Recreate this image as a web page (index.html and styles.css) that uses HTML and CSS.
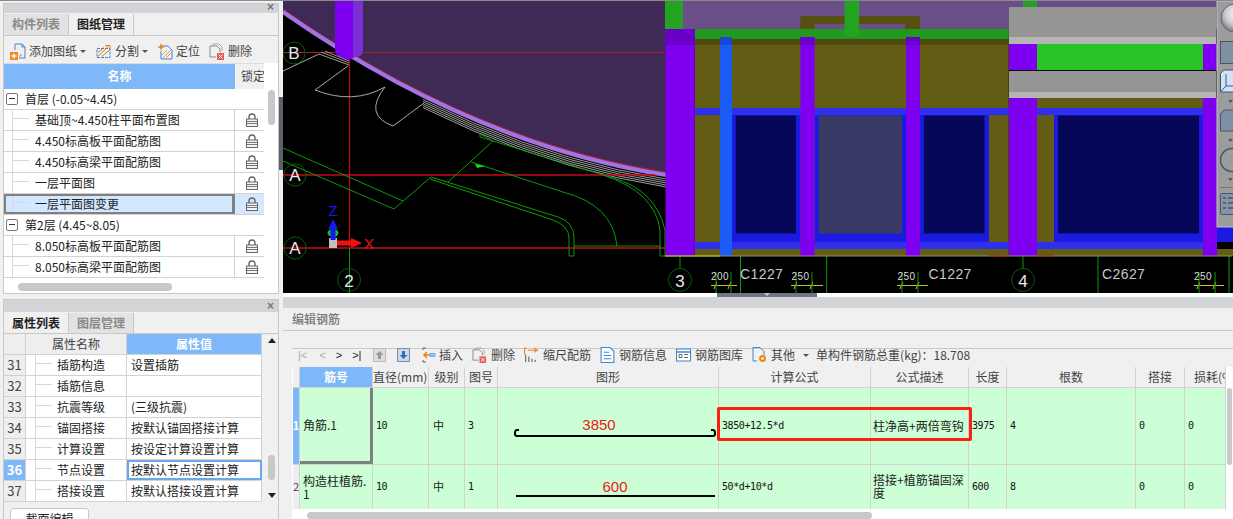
FILE: index.html
```html
<!DOCTYPE html>
<html lang="zh">
<head>
<meta charset="utf-8">
<title>编辑钢筋</title>
<link rel="stylesheet" href="styles.css">
</head>
<body>
<svg class="defs" width="0" height="0">
  <defs>
    <radialGradient id="ball" cx=".55" cy=".35" r=".7"><stop offset="0" stop-color="#fdfdfd"/><stop offset=".6" stop-color="#c4c6ca"/><stop offset="1" stop-color="#6a7078"/></radialGradient>
  </defs>
  <symbol id="i-lock" viewBox="0 0 12 14"><path d="M3 6V4a3 3 0 0 1 6 0v2" fill="none" stroke="#666" stroke-width="1.4"/><rect x=".5" y="6" width="11" height="7.500" fill="#f4f4f4" stroke="#666"/><path d="M1 8.500h10M1 10.500h10" stroke="#777"/></symbol>
  <symbol id="i-add" viewBox="0 0 16 17"><path d="M5 1h7l3 3v11H9M5 1v6" fill="none" stroke="#3f86d0"/><path d="M12 1v3h3" fill="none" stroke="#3f86d0"/><path d="M11 11v2h-2" fill="none" stroke="#999"/><rect x="0" y="9" width="8" height="8" fill="#f08a1c"/><path d="M4 10.500v5M1.500 13h5" stroke="#fff" stroke-width="1.4"/></symbol>
  <symbol id="i-split" viewBox="0 0 17 16"><path d="M2 5h13v9H2z" fill="none" stroke="#3f86d0" stroke-dasharray="3 1"/><path d="M3 13 13 3M7 13l8-7M3 9l6-5" stroke="#d9781c" fill="none"/><path d="M10 2h5v4" fill="none" stroke="#d9781c"/></symbol>
  <symbol id="i-locate" viewBox="0 0 16 17"><path d="M5 3h6l4 4v9H4V8" fill="none" stroke="#3f86d0"/><path d="M6 15l8-8M9 15l5-5M5 12l5-5" stroke="#e8a060"/><path d="M4 0l1 3 3 1-3 1-1 3-1-3-3-1 3-1z" fill="#f0801c"/></symbol>
  <symbol id="i-del" viewBox="0 0 16 17"><path d="M4 3V1h6l3 3v4" fill="none" stroke="#aaa"/><path d="M1 3h7l3 3v3M1 3v11h6" fill="none" stroke="#888"/><rect x="8" y="10" width="7" height="7" fill="#e05a5a"/><path d="M9.500 11.500l4 4M13.500 11.500l-4 4" stroke="#fff"/></symbol>
  <symbol id="i-up" viewBox="0 0 13 14"><rect x=".5" y=".5" width="12" height="13" fill="#ddd" stroke="#bbb"/><path d="M6.500 3 2.500 7H5v4h3V7h2.500z" fill="#999"/></symbol>
  <symbol id="i-down" viewBox="0 0 13 14"><rect x=".5" y=".5" width="12" height="13" fill="#cfd8e4" stroke="#7d8fa6"/><path d="M6.500 11l4-4H8V3H5v4H2.500z" fill="#2a6fc9"/></symbol>
  <symbol id="i-insert" viewBox="0 0 15 16"><path d="M2 1h3M2 1v2M2 13v2h3" stroke="#666" fill="none"/><path d="M9 8H4M6 5 3 8l3 3" stroke="#e8801c" stroke-width="1.500" fill="none"/><rect x="9" y="6.500" width="5" height="3" fill="#9cc4ec" stroke="#4a8ad0" stroke-width=".6"/></symbol>
  <symbol id="i-scale" viewBox="0 0 13 15"><path d="M0 1v6M0 1h2" stroke="#e8801c" fill="none"/><path d="M3 3h8M9 1l3 2-3 2" stroke="#e8801c" fill="none"/><path d="M1 14V7M4 14V9M7 14v-3M10 14v-2" stroke="#777" stroke-width="1.200"/></symbol>
  <symbol id="i-info" viewBox="0 0 13 15"><path d="M.5.500H9L12.500 4v10.500H.5z" fill="#fff" stroke="#3f86d0"/><path d="M3 5h5M3 8h7M3 11h7" stroke="#3f86d0"/></symbol>
  <symbol id="i-lib" viewBox="0 0 15 13"><rect x=".5" y=".5" width="14" height="12" fill="#fff" stroke="#3f86d0"/><path d="M1 3.500h13" stroke="#3f86d0" stroke-width="1.500"/><path d="M3 6h3v3H3zM8 6h4M8 9h4" stroke="#666" fill="none"/></symbol>
  <symbol id="i-other" viewBox="0 0 15 16"><path d="M1 .500h7l4 4v4M1 .500V14h4" fill="none" stroke="#3f86d0"/><circle cx="10.500" cy="11.500" r="3.500" fill="#f08a1c"/><circle cx="10.500" cy="11.500" r="1.200" fill="#fff"/></symbol>
</svg>

<div class="app">
  <aside class="side">
    <section class="panel drawings">
      <div class="panel-title"><span class="close">×</span></div>
      <div class="tabs">
        <span class="tab">构件列表</span>
        <span class="tab on">图纸管理</span>
      </div>
      <div class="toolbar">
        <span class="tool"><svg class="ico"><use href="#i-add"/></svg>添加图纸<i class="caret"></i></span>
        <span class="tool"><svg class="ico wide"><use href="#i-split"/></svg>分割<i class="caret"></i></span>
        <span class="tool"><svg class="ico"><use href="#i-locate"/></svg>定位</span>
        <span class="tool"><svg class="ico"><use href="#i-del"/></svg>删除</span>
      </div>
      <div class="dwg-head">
        <span class="head-blue">名称</span>
        <span class="head-plain">锁定</span>
      </div>
      <div class="dwg-body">
        <div class="dwg-row group"><span class="toggle"></span><span>首层 (-0.05~4.45)</span></div>
        <div class="dwg-row"><span class="dwg-name"><i class="branch"></i>基础顶~4.450柱平面布置图</span><span class="lockcell"><svg class="lock"><use href="#i-lock"/></svg></span></div>
        <div class="dwg-row"><span class="dwg-name"><i class="branch"></i>4.450标高板平面配筋图</span><span class="lockcell"><svg class="lock"><use href="#i-lock"/></svg></span></div>
        <div class="dwg-row"><span class="dwg-name"><i class="branch"></i>4.450标高梁平面配筋图</span><span class="lockcell"><svg class="lock"><use href="#i-lock"/></svg></span></div>
        <div class="dwg-row"><span class="dwg-name"><i class="branch"></i>一层平面图</span><span class="lockcell"><svg class="lock"><use href="#i-lock"/></svg></span></div>
        <div class="dwg-row picked"><span class="dwg-name"><i class="branch"></i>一层平面图变更</span><span class="lockcell"><svg class="lock"><use href="#i-lock"/></svg></span></div>
        <div class="dwg-row group"><span class="toggle"></span><span>第2层 (4.45~8.05)</span></div>
        <div class="dwg-row"><span class="dwg-name"><i class="branch"></i>8.050标高板平面配筋图</span><span class="lockcell"><svg class="lock"><use href="#i-lock"/></svg></span></div>
        <div class="dwg-row"><span class="dwg-name"><i class="branch"></i>8.050标高梁平面配筋图</span><span class="lockcell"><svg class="lock"><use href="#i-lock"/></svg></span></div>
      </div>
      <i class="thumb dwg-v"></i>
      <i class="thumb dwg-h"></i>
    </section>

    <section class="panel props">
      <div class="panel-title"><span class="close">×</span></div>
      <div class="tabs">
        <span class="tab on">属性列表</span>
        <span class="tab">图层管理</span>
      </div>
      <div class="prop-table">
        <div class="prop-row head"><span class="num"></span><span class="pname">属性名称</span><span class="pval">属性值</span></div>
        <div class="prop-row"><span class="num">31</span><span class="pname"><i class="branch"></i>插筋构造</span><span class="pval">设置插筋</span></div>
        <div class="prop-row"><span class="num">32</span><span class="pname"><i class="branch"></i>插筋信息</span><span class="pval"></span></div>
        <div class="prop-row"><span class="num">33</span><span class="pname"><i class="branch"></i>抗震等级</span><span class="pval">(三级抗震)</span></div>
        <div class="prop-row"><span class="num">34</span><span class="pname"><i class="branch"></i>锚固搭接</span><span class="pval">按默认锚固搭接计算</span></div>
        <div class="prop-row"><span class="num">35</span><span class="pname"><i class="branch"></i>计算设置</span><span class="pval">按设定计算设置计算</span></div>
        <div class="prop-row active"><span class="num">36</span><span class="pname"><i class="branch"></i>节点设置</span><span class="pval">按默认节点设置计算</span></div>
        <div class="prop-row"><span class="num">37</span><span class="pname"><i class="branch"></i>搭接设置</span><span class="pval">按默认搭接设置计算</span></div>
      </div>
      <i class="arrow-up"></i>
      <i class="arrow-down"></i>
      <i class="thumb prop-v"></i>
      <div class="prop-foot"><span class="foot-btn">截面编辑</span></div>
    </section>
    <i class="side-grip"></i>
  </aside>

  <main class="work">
    <svg class="cad" viewBox="0 1 950 292" width="950" height="292">
      <rect y="1" width="950" height="292" fill="#000"/>
      <path d="M0 0H383V175Q190 144.500 0 12Z" fill="#3f2a55"/>
      <path d="M0 9.500Q190 142 383 172.500" fill="none" stroke="#a8283c" stroke-width="1.500"/>
      <path d="M0 12Q190 144.500 383 175" fill="none" stroke="#a273e4" stroke-width="4"/>
      <clipPath id="stripes"><rect x="140" y="90" width="243" height="110"/></clipPath>
      <g fill="none" stroke="#c4c4c4" stroke-width=".8" clip-path="url(#stripes)">
        <path d="M0 16Q190 148.500 383 179"/><path d="M0 18Q190 150.500 383 181"/><path d="M0 20Q190 152.500 383 183"/><path d="M0 22Q190 154.500 383 185"/><path d="M0 24Q190 156.500 383 187"/>
      </g>
      <g fill="none">
        <path d="M0 52.500H382" stroke="#b0182c" stroke-width="1.200"/>
        <path d="M0 175H372" stroke="#c00c18" stroke-width="1.500"/>
        <path d="M0 248H382" stroke="#c00c18" stroke-width="1.500"/>
        <path d="M66.500 60V248" stroke="#c00c18" stroke-width="1.200"/>
      </g>
      <path d="M52 1H80V50Q80 57 72 57L66 60 60 58Q52 56 52 50Z" fill="#7f00ee"/>
      <path d="M70 1H80V50Q80 57 72 57H70Z" fill="#7a30d4"/>
      <g fill="none" stroke="#aaa" stroke-width="1">
        <path d="M0 71 36 54M65 66 32 90"/>
        <path d="M32 90Q70 105 102 87"/>
        <path d="M102 87Q80 115 110 126L141 103"/>
      </g>
      <g fill="none" stroke="#c4c4c4" stroke-width=".8">
        <path d="M36 54 66 65M38 52 66 63M42 51 66 61"/>
      </g>
      <g fill="none" stroke="#0a9a0a" stroke-width="1">
        <path d="M0 148 120 201M0 161 111 209 148 177 275 217Q291 222 291 238V256H286V238Q286 226 270 220L147 179"/>
        <path d="M165 182 210 141 197 134V137L330 178Q373 190 382 230M188 162 280 192Q330 205 334 246M291 246H378M382 230V256H377V230Q372 192 320 175"/>
        <path d="M66.500 248V293"/>
        <path d="M457.500 256V293M543.700 256V293M815 256V293M946 256V293"/>
        <path d="M397 256V269M740 256V269"/>
      </g>
      <path d="M192 164l10 2-8 2z" fill="#18e018"/>
      <g fill="none" stroke="#0a5a0a">
        <circle cx="11" cy="53" r="11"/><circle cx="12" cy="175" r="11"/><circle cx="12" cy="248" r="11"/><circle cx="66" cy="280" r="11.500"/><circle cx="397" cy="280" r="11.500"/><circle cx="740" cy="280" r="11.500"/>
      </g>
      <g class="cad-mark">
        <text x="11" y="59">B</text><text x="12" y="181">A</text><text x="12" y="254">A</text><text x="66" y="287">2</text><text x="397" y="287">3</text><text x="740" y="287">4</text>
      </g>
      <text class="cad-z" x="50" y="216">Z</text>
      <rect x="46" y="238" width="8" height="10" fill="#c0c0c0"/>
      <path d="M48.500 240V229H45L50 219 55 229H52V240Z" fill="#1818f0"/>
      <ellipse cx="50" cy="233" rx="5.500" ry="4" fill="#10c020"/>
      <rect x="47.500" y="224" width="5" height="16" fill="#1818f0"/>
      <path d="M54 240.500H68V238L79 243 68 248V245.500H54Z" fill="#f01010"/>
      <text class="cad-x" x="81" y="249">X</text>

      <!-- building elevation -->
      <rect x="382" y="1" width="568" height="28" fill="#6b4d88"/>
      <rect x="382" y="1" width="18" height="28" fill="#22a322"/>
      <path d="M517.400 16H637V29H622V24H531.600V29H517.400Z" fill="#564f10"/>
      <rect x="411.700" y="29" width="314" height="227" fill="#635c14"/>
      <rect x="411.700" y="29" width="314" height="10" fill="#1f9a1f"/>
      <rect x="411.700" y="39" width="314" height="6" fill="#514a10"/>
      <rect x="561.600" y="1" width="14.600" height="36" fill="#22a322"/>
      <rect x="754" y="98" width="166" height="158" fill="#635c14"/>
      <rect x="411.700" y="108" width="508" height="7" fill="#2f2ff0"/>
      <rect x="411.700" y="242" width="522" height="7" fill="#2f2ff0"/>
      <g fill="#1a1ae0">
        <rect x="449" y="115" width="68.400" height="127"/><rect x="531.600" y="115" width="91.400" height="127"/><rect x="636.900" y="115" width="69.100" height="127"/><rect x="771" y="115" width="149" height="127"/>
      </g>
      <g fill="#07075a">
        <rect x="452.700" y="115.500" width="60.300" height="118"/><rect x="640.900" y="115.500" width="60.700" height="118"/><rect x="775" y="115.500" width="141" height="118"/>
      </g>
      <rect x="535.600" y="115.500" width="83.400" height="118" fill="#3a3a66"/>
      <rect x="382.500" y="29" width="29.200" height="227" fill="#7f00f0"/>
      <rect x="382.500" y="29" width="29.200" height="16" fill="#6a00c8"/>
      <rect x="437" y="37" width="12" height="219" fill="#1a5cf5"/>
      <rect x="437" y="37" width="12" height="8" fill="#1a48d0"/>
      <rect x="517.400" y="37" width="14.200" height="219" fill="#7f00f0"/>
      <rect x="623" y="37" width="13.900" height="219" fill="#7f00f0"/>
      <rect x="517.400" y="37" width="14.200" height="8" fill="#6a00c8"/>
      <rect x="623" y="37" width="13.900" height="8" fill="#6a00c8"/>
      <rect x="726" y="98" width="28" height="158" fill="#7f00f0"/>
      <rect x="919.800" y="98" width="14.200" height="158" fill="#7f00f0"/>
      <rect x="934" y="115" width="16" height="127" fill="#1a1ae0"/>
      <rect x="934" y="249" width="16" height="7" fill="#635c14"/>
      <rect x="740" y="1" width="14" height="6" fill="#22a322"/>
      <rect x="726" y="7" width="207" height="30" fill="#959595"/>
      <rect x="726" y="37" width="207" height="7" fill="#b5b5b5"/>
      <rect x="726" y="44" width="28" height="26" fill="#7f00f0"/>
      <rect x="754" y="44" width="166" height="26" fill="#28c428"/>
      <rect x="920" y="44" width="14" height="26" fill="#7f00f0"/>
      <rect x="726" y="71" width="207" height="21" fill="#959595"/>
      <rect x="726" y="92" width="207" height="6" fill="#b5b5b5"/>
      <path d="M382 256H949" stroke="#8f8f6a"/>
      <path d="M382 256H437" stroke="#c8c020"/>
      <path d="M706 256H724M754 256H771" stroke="#c01010"/>

      <!-- dimension marks -->
      <g stroke="#c8c020" fill="none">
        <path d="M428 285.500H454M508 285.500H540M614 285.500H645M911 285.500H941"/>
        <path d="M434 282l-3 7M448 282l-3 7M514 282l-3 7M530 282l-3 7M620 282l-3 7M636 282l-3 7M917 282l-3 7M933 282l-3 7"/>
      </g>
      <g stroke="#0a9a0a"><path d="M433 272V293M448 272V293M513 272V293M529 272V293M619 272V293M635 272V293M916 272V293M932 272V293"/></g>
      <g class="cad-dim"><text x="428" y="280">200</text><text x="508.500" y="280">250</text><text x="614.500" y="280">250</text><text x="911" y="280">250</text></g>
      <g class="cad-label"><text x="457" y="279">C1227</text><text x="645.500" y="279">C1227</text><text x="819" y="279">C2627</text></g>

      <!-- floating view toolbar -->
      <rect x="934" y="1" width="17" height="226" fill="#9c9c9c" stroke="#c4c4c4"/>
      <circle cx="952" cy="18" r="14" fill="url(#ball)" stroke="#5a6470"/>
      <rect x="937.500" y="41.500" width="20" height="22" fill="#8090a4" stroke="#4a5664"/>
      <path d="M941 70H960V92H937.500V73.500Z" fill="#cfe2fb" stroke="#4a5664"/>
      <path d="M937.500 92 943 86V74M943 86H960" fill="none" stroke="#4a5664"/>
      <path d="M941 110H960V131H937.500V114Z" fill="#8090a4" stroke="#4a5664"/>
      <path d="M945 100h5l-2.500 3zM945 139h5l-2.500 3zM945 178h5l-2.500 3z" fill="#555"/>
      <circle cx="949" cy="160" r="11.500" fill="none" stroke="#4a5664" stroke-width="1.500"/>
      <path d="M937 187.500H950" stroke="#777"/>
      <rect x="937.500" y="193.500" width="20" height="21" rx="1" fill="#8494a6" stroke="#4a5664"/>
      <path d="M940 198h3M945 198h5M940 203h3M945 203h5M940 208h3M945 208h5" stroke="#333"/>
    </svg>

    <div class="sash"><span class="sash-grip"></span></div>

    <section class="editor">
      <div class="panel-title wide-title"></div>
      <div class="editor-title">编辑钢筋</div>
      <div class="editor-space"></div>
      <div class="rebar-box">
        <div class="rebar-tools">
          <span class="pager"><b class="dim first">|&lt;</b><b class="dim">&lt;</b><b>&gt;</b><b>&gt;|</b></span>
          <svg class="ico13"><use href="#i-up"/></svg>
          <svg class="ico13 nudge"><use href="#i-down"/></svg>
          <span class="tool tight nudge"><svg class="ico"><use href="#i-insert"/></svg>插入</span>
          <span class="tool"><svg class="ico"><use href="#i-del"/></svg>删除</span>
          <span class="tool"><svg class="ico"><use href="#i-scale"/></svg>缩尺配筋</span>
          <span class="tool"><svg class="ico"><use href="#i-info"/></svg>钢筋信息</span>
          <span class="tool"><svg class="ico"><use href="#i-lib"/></svg>钢筋图库</span>
          <span class="tool"><svg class="ico"><use href="#i-other"/></svg>其他<i class="caret"></i></span>
          <span class="total">单构件钢筋总重(kg)：18.708</span>
        </div>
        <div class="grid-wrap">
          <div class="rb-row rb-head">
            <span class="rb-corner"></span><span class="rb-blue">筋号</span><span class="c-dia">直径(mm)</span><span>级别</span><span>图号</span><span>图形</span><span>计算公式</span><span>公式描述</span><span>长度</span><span>根数</span><span>搭接</span><span>损耗(%)</span>
          </div>
          <div class="rb-row rb-one">
            <span class="rb-idx on">1</span>
            <span class="rb-name sel">角筋.1</span>
            <span class="mono">10</span>
            <span class="rb-grade">中</span>
            <span class="mono">3</span>
            <span class="rb-shape">
              <svg width="220" height="76" viewBox="0 0 220 76"><text class="len" x="101" y="42">3850</text><path d="M21 42H19Q17 42 17 45V46Q17 48 19 48H215Q217 48 217 46V45Q217 42 215 42H213" fill="none" stroke="#000" stroke-width="2"/></svg>
            </span>
            <span class="mono">3850+12.5*d</span>
            <span class="rb-desc">柱净高+两倍弯钩</span>
            <span class="mono">3975</span>
            <span class="mono">4</span>
            <span class="mono">0</span>
            <span class="mono">0</span>
          </div>
          <div class="rb-row rb-two">
            <span class="rb-idx">2</span>
            <span class="rb-name">构造柱植筋.<br>1</span>
            <span class="mono">10</span>
            <span class="rb-grade">中</span>
            <span class="mono">1</span>
            <span class="rb-shape">
              <svg width="220" height="44" viewBox="0 0 220 44"><text class="len" x="117" y="27">600</text><path d="M18 31H217" fill="none" stroke="#000" stroke-width="2"/></svg>
            </span>
            <span class="mono">50*d+10*d</span>
            <span class="rb-desc">搭接+植筋锚固深度</span>
            <span class="mono">600</span>
            <span class="mono">8</span>
            <span class="mono">0</span>
            <span class="mono">0</span>
          </div>
          <i class="redbox"></i>
          <i class="thumb rb-v"></i>
        </div>
        <i class="thumb rb-h"></i>
      </div>
    </section>
  </main>
</div>
</body>
</html>
```

FILE: styles.css
```css
* { box-sizing: border-box; }
html, body { margin: 0; height: 519px; overflow: hidden; }
body {
  background: #f0f0f0;
  color: #222;
  font: 12px/1.2 "Noto Sans CJK SC", "Noto Sans", sans-serif;
}
i { display: block; font-style: normal; }
.defs { position: absolute; }

.app { display: flex; height: 519px; border-top: 1px solid #8a8a8a; }
.side {
  position: relative;
  width: 283px;
  flex: none;
  display: flex;
  flex-direction: column;
  gap: 5px;
  padding: 2px 4px 0 3px;
  background: #f0f0f0;
}
.side-grip { position: absolute; left: 279px; top: 96px; width: 4px; height: 73px; background: #5c6068; }
.work { flex: 1; min-width: 0; display: flex; flex-direction: column; background: #fff; }

/* side panels */
.panel { position: relative; border: 1px solid #c8c8c8; background: #fff; }
.drawings { height: 291px; flex: none; }
.props { flex: 1; min-height: 0; overflow: hidden; border-bottom: 0; background: #f0f0f0; }
.panel-title {
  height: 9px;
  background: #d3d4d8;
  position: relative;
}
.props .panel-title { height: 12px; }
.close {
  position: absolute;
  right: 4px;
  top: -4px;
  font: bold 12px/14px "Liberation Sans", sans-serif;
  color: #777;
}
.props .close { top: -1px; }
.tabs {
  height: 23px;
  display: flex;
  background: #f0f0f0;
  border-bottom: 1px solid #c8c8c8;
  padding-top: 1px;
}
.props .tabs { height: 22px; }
.tab {
  width: 65px;
  background: #e2e2e2;
  color: #8a8a8a;
  font-weight: 700;
  display: flex;
  align-items: center;
  justify-content: center;
  border-right: 1px solid #c8c8c8;
}
.tab.on { background: #f0f0f0; color: #222; }

.toolbar {
  height: 27px;
  display: flex;
  align-items: center;
  gap: 9px;
  padding: 3px 0 0 6px;
  background: #f0f0f0;
  color: #444;
}
.tool { display: flex; align-items: center; gap: 3px; color: #444; white-space: nowrap; }
.ico { width: 16px; height: 17px; flex: none; }
.ico.wide { width: 17px; }
.ico13 { width: 13px; height: 14px; flex: none; }
.caret {
  width: 0;
  height: 0;
  margin-left: 0;
  border: 3px solid transparent;
  border-top: 3px solid #555;
  border-bottom: 0;
}

.dwg-head { height: 26px; display: flex; width: 260px; background: #f0f0f0; border-top: 1px solid #dcdcdc; }
.head-blue {
  width: 231px;
  background: #7eb8f8;
  color: #fff;
  font-weight: 700;
  display: flex;
  align-items: center;
  justify-content: center;
}
.head-plain { width: 29px; display: flex; align-items: center; padding-left: 6px; color: #444; white-space: nowrap; overflow: hidden; }
.dwg-body { width: 260px; }
.dwg-row {
  height: 21px;
  display: grid;
  grid-template-columns: 231px 29px;
  align-items: center;
  border-bottom: 1px solid #d2d2d2;
  color: #222;
}
.dwg-row.group { display: flex; gap: 7px; padding-left: 2px; border-bottom-color: #d2d2d2; }
.toggle {
  width: 12px;
  height: 12px;
  border: 1px solid #777;
  border-radius: 2px;
  position: relative;
  flex: none;
}
.toggle::after { content: ""; position: absolute; left: 2px; right: 2px; top: 4px; height: 1px; background: #333; }
.dwg-name {
  height: 100%;
  display: flex;
  align-items: center;
  gap: 6px;
  padding-left: 8px;
  border-right: 1px solid #d2d2d2;
  white-space: nowrap;
  background: linear-gradient(#d8d8d8, #d8d8d8) 8px 0 / 1px 100% no-repeat;
}
.branch { width: 17px; height: 1px; margin-top: -3px; background: #d8d8d8; flex: none; }
.lockcell { display: flex; justify-content: center; padding-left: 5px; }
.lock { width: 12px; height: 14px; }
.picked { background: #d2e8fe; }
.picked .dwg-name { border: 2px solid #808080; border-right-width: 3px; padding-left: 6px; background-position: 6px 0; }
.thumb { position: absolute; background: #c8c8c8; border-radius: 4px; }
.dwg-v { left: 264px; top: 86px; width: 7px; height: 35px; }
.dwg-h { left: 14px; top: 279px; width: 154px; height: 8px; }

.prop-table { background: #fff; height: 168px; width: 258px; }
.prop-row {
  height: 21px;
  display: grid;
  grid-template-columns: 22px 101px 135px;
  border-bottom: 1px solid #d2d2d2;
}
.prop-row > span { display: flex; align-items: center; border-right: 1px solid #d2d2d2; white-space: nowrap; }
.prop-row .num { background: #eee; justify-content: center; color: #444; font-size: 13px; }
.pname { gap: 5px; padding-left: 10px; background: linear-gradient(#d8d8d8, #d8d8d8) 9px 0 / 1px 100% no-repeat; }
.pname .branch { width: 16px; }
.pval { padding-left: 4px; }
.head .pname { justify-content: center; padding-left: 0; background: #eee; color: #444; }
.head .pval { justify-content: center; padding-left: 0; background: #7eb8f8; color: #fff; font-weight: 700; }
.head { height: 21px; }
.active .num { background: #7eb8f8 !important; color: #fff !important; font-weight: 700; }
.active .pval { border: 2px solid #6aa8ee; padding-left: 2px; }
.arrow-up, .arrow-down { position: absolute; left: 264px; width: 0; height: 0; border: 4px solid transparent; }
.arrow-up { top: 38px; border-bottom: 5px solid #222; border-top: 0; }
.arrow-down { top: 193px; border-top: 5px solid #222; border-bottom: 0; }
.prop-v { left: 264px; top: 155px; width: 7px; height: 25px; }
.prop-foot { padding: 6px 0 0 6px; }
.foot-btn {
  display: flex;
  width: 79px;
  height: 22px;
  align-items: center;
  justify-content: center;
  background: #fff;
  border: 1px solid #c8c8c8;
  border-radius: 3px 3px 0 0;
}

/* canvas */
.cad { display: block; flex: none; }
.cad-mark text { fill: #e8e8e8; font: 17px "Liberation Sans", sans-serif; text-anchor: middle; }
.cad-z { fill: #1818f0; font: 15px "Liberation Sans", sans-serif; text-anchor: middle; }
.cad-x { fill: #f01010; font: 15px "Liberation Sans", sans-serif; }
.cad-dim text { fill: #dcdcdc; font: 10px "Liberation Sans", sans-serif; letter-spacing: .4px; }
.cad-label text { fill: #c8c8c8; font: 14px "Liberation Sans", sans-serif; letter-spacing: .4px; }

.sash { height: 4px; position: relative; background: #fff; flex: none; }
.sash-grip {
  position: absolute;
  left: 434px;
  top: 0;
  width: 100px;
  height: 4px;
  background: #6e7684;
}
.sash-grip::after {
  content: "";
  position: absolute;
  left: 47px;
  top: 0;
  border: 3px solid transparent;
  border-top: 3px solid #c8c8d0;
  border-bottom: 0;
}

/* rebar editor */
.editor { flex: 1; background: #f0f0f0; display: flex; flex-direction: column; min-height: 0; }
.wide-title { height: 11px; flex: none; }
.editor-title {
  height: 23px;
  flex: none;
  padding: 4px 0 0 9px;
  border-bottom: 1px solid #c8c8d0;
  color: #777;
  font-weight: 500;
}
.editor-space { height: 17px; flex: none; }
.rebar-box {
  position: relative;
  flex: 1;
  margin-left: 9px;
  background: #fff;
  border-top: 1px solid #c8c8c8;
  min-height: 0;
}
.rebar-tools {
  height: 18px;
  padding: 0 0 6px 6px;
  display: flex;
  align-items: center;
  gap: 9px;
  background: #f0f0f0;
  white-space: nowrap;
}
.rebar-tools .tool { gap: 4px; }
.rebar-tools .tool.tight { gap: 3px; }
.rebar-tools .caret { margin-left: 4px; }
.nudge { margin-left: 2px; }
.pager { display: flex; gap: 10px; width: 66px; font: 11px "Liberation Sans", sans-serif; color: #222; }
.pager b { font-weight: 400; flex: none; }
.pager .first { margin-right: 2px; }
.pager .dim { color: #aaa; }
.rebar-tools .ico { width: 15px; height: 16px; }
.total { color: #444; margin-left: -2px; }

.grid-wrap { position: relative; overflow: hidden; margin-left: 1px; }
.rb-row {
  display: grid;
  grid-template-columns: 7px 73px 56px 36px 33px 221px 152px 98px 38px 129px 49px 41px;
  width: 933px;
  border-bottom: 1px solid #d2d2d2;
}
.rb-row > span { display: flex; align-items: center; border-right: 1px solid #d2d2d2; white-space: nowrap; overflow: hidden; min-width: 0; }
.rb-head { height: 21px; background: #f0f0f0; }
.rb-head > span { justify-content: center; color: #444; }
.rb-head .c-dia { justify-content: flex-start; }
.rb-head > span:last-child { justify-content: flex-start; padding-left: 9px; }
.rb-blue { background: #7eb8f8; color: #fff !important; font-weight: 700; }
.rb-one { height: 77px; background: #ccffd5; }
.rb-two { height: 44px; background: #ccffd5; border-bottom: 0; }
.rb-idx { background: #eee; justify-content: center; color: #444; font-size: 11px; }
.rb-idx.on { background: #7eb8f8; color: #fff; font-weight: 700; }
.rb-name { padding-left: 3px; color: #222; line-height: 13px; }
.rb-name.sel { border-right: 3px solid #808080 !important; border-bottom: 3px solid #808080; }
.mono { font: 10px "DejaVu Sans Mono", "Liberation Mono", monospace; padding: 0 0 2px 3px; color: #111; letter-spacing: -.4px; }
.rb-grade { padding-left: 4px; font-size: 11px; }
.rb-shape { padding: 0; }
.rb-shape svg { display: block; flex: none; }
.rb-desc { padding: 0 0 2px 2px; white-space: normal !important; line-height: 13px; color: #222; }
.len { fill: #f01818; font: 15px "Liberation Sans", sans-serif; text-anchor: middle; }
.redbox {
  position: absolute;
  left: 424px;
  top: 40px;
  width: 255px;
  height: 34px;
  border: 3px solid #f82010;
  border-radius: 2px;
}
.rb-v { left: 934px; top: 21px; width: 5px; height: 77px; }
.rb-h { left: 15px; bottom: 0; width: 565px; height: 7px; }
```
